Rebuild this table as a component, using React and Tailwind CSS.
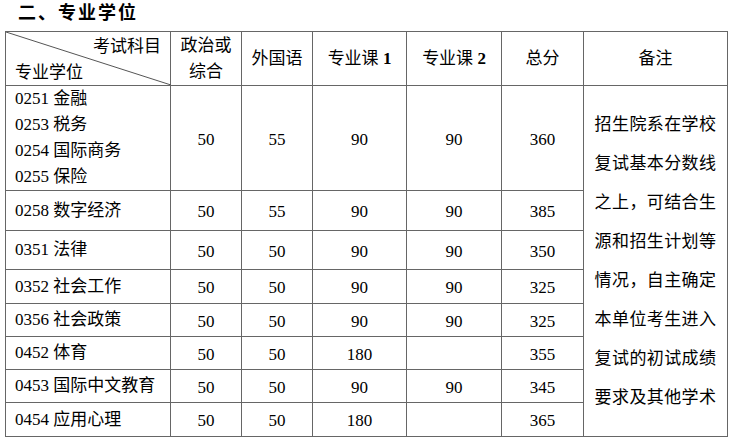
const rows = [
  { name: ["0251 金融", "0253 税务", "0254 国际商务", "0255 保险"], h: "h-[105px]", v: ["50", "55", "90", "90", "360"] },
  { name: ["0258 数字经济"], h: "h-[40px]", v: ["50", "55", "90", "90", "385"] },
  { name: ["0351 法律"], h: "h-[39px]", v: ["50", "50", "90", "90", "350"] },
  { name: ["0352 社会工作"], h: "h-[34px]", v: ["50", "50", "90", "90", "325"] },
  { name: ["0356 社会政策"], h: "h-[33px]", v: ["50", "50", "90", "90", "325"] },
  { name: ["0452 体育"], h: "h-[33px]", v: ["50", "50", "180", "", "355"] },
  { name: ["0453 国际中文教育"], h: "h-[33px]", v: ["50", "50", "90", "90", "345"] },
  { name: ["0454 应用心理"], h: "h-[34px]", v: ["50", "50", "180", "", "365"] },
]

const notes = [
  "招生院系在学校",
  "复试基本分数线",
  "之上，可结合生",
  "源和招生计划等",
  "情况，自主确定",
  "本单位考生进入",
  "复试的初试成绩",
  "要求及其他学术",
]

const cell = "border border-[#666] text-center align-middle p-0 font-normal"

const App = () => {
  return (
    <div className="w-[732px] h-[443px] bg-white text-black overflow-hidden font-['Liberation_Serif','Noto_Sans_CJK_SC',serif] text-[17px]">
      <div className="h-[31px] pl-[18px] pt-[1px] text-[18px] font-bold tracking-[2px] leading-[24px]">二、专业学位</div>
      <table className="ml-[5px] w-[722px] table-fixed border-collapse">
        <colgroup>
          <col className="w-[165px]" />
          <col className="w-[71px]" />
          <col className="w-[71px]" />
          <col className="w-[94px]" />
          <col className="w-[95px]" />
          <col className="w-[82px]" />
          <col className="w-[144px]" />
        </colgroup>
        <thead>
          <tr className="h-[54px]">
            <th className="border border-[#666] p-0 font-normal">
              <div className="relative h-[53px]">
                <svg className="absolute inset-0" width="165" height="53" viewBox="0 0 165 53">
                  <line x1="0" y1="0" x2="165" y2="53" stroke="#555" strokeWidth="1" />
                </svg>
                <div className="absolute right-[9px] top-[2px] leading-[26px]">考试科目</div>
                <div className="absolute left-[9px] top-[28px] leading-[26px]">专业学位</div>
              </div>
            </th>
            <th className={cell}>
              <div className="leading-[26px]">政治或<br />综合</div>
            </th>
            <th className={cell}>外国语</th>
            <th className={cell}>专业课 <span className="font-bold">1</span></th>
            <th className={cell}>专业课 <span className="font-bold">2</span></th>
            <th className={cell}>总分</th>
            <th className={cell}>备注</th>
          </tr>
        </thead>
        <tbody>
          {rows.map((r, i) => (
            <tr key={i} className={r.h}>
              <td className="border border-[#666] p-0 pl-[9px] align-middle">
                {r.name.map((n) => (
                  <div key={n} className="leading-[26px]">{n}</div>
                ))}
              </td>
              {r.v.map((x, j) => (
                <td key={j} className={cell + " pt-[3px]"}>{x}</td>
              ))}
              {i === 0 && (
                <td rowSpan={8} className="border border-[#666] p-0 align-top">
                  <div className="h-[350px] overflow-hidden pt-[19px] text-center tracking-[0.4px] leading-[39px]">
                    {notes.map((n) => (
                      <div key={n}>{n}</div>
                    ))}
                  </div>
                </td>
              )}
            </tr>
          ))}
        </tbody>
      </table>
    </div>
  )
}

export default App
